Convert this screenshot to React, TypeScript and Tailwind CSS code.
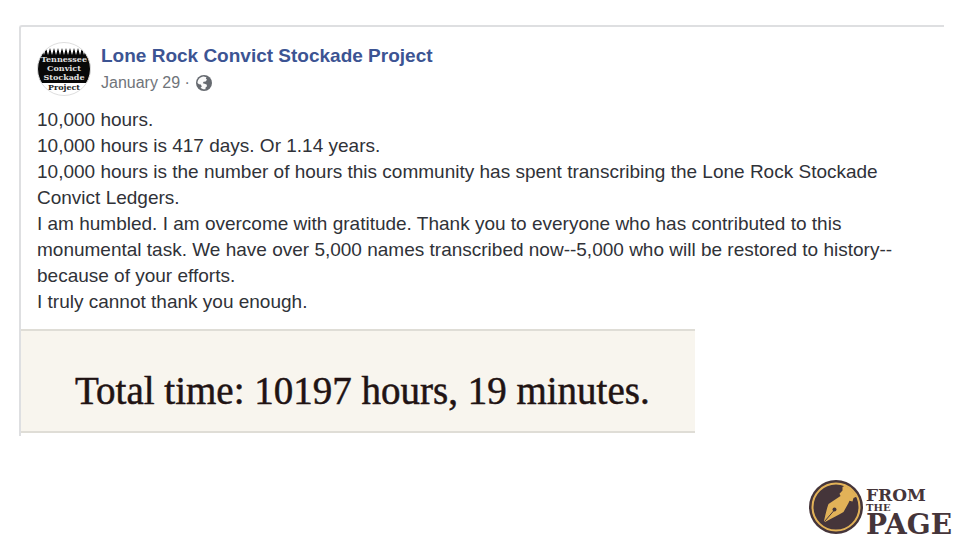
import React from "react";

function Avatar() {
  return (
    <svg className="h-[54px] w-[54px] shrink-0" viewBox="0 0 54 54" role="img" aria-label="Tennessee Convict Stockade Project">
      <defs>
        <clipPath id="avatar-clip">
          <circle cx="27" cy="27" r="26.5" />
        </clipPath>
      </defs>
      <circle cx="27" cy="27" r="26.5" fill="#fff" />
      <g clipPath="url(#avatar-clip)">
        <path
          fill="#080808"
          d="M0 41V13L3 13 5 6 7 13 9 6 11 13 13 6 15 13 17 6 19 13 21 6 23 13 25 6 27 13 29 6 31 13 33 6 35 13 37 6 39 13 41 6 43 13 45 6 47 13 49 6 51 13H54V41Z"
        />
        <g fontFamily="'DejaVu Serif', serif" fontWeight="700" fontSize="8" textAnchor="middle" fill="#e0e0e0">
          <text x="27" y="20">Tennessee</text>
          <text x="27" y="29">Convict</text>
          <text x="27" y="38">Stockade</text>
          <text x="27" y="48" fill="#222">Project</text>
        </g>
      </g>
      <circle cx="27" cy="27" r="26.500" fill="none" stroke="#dedede" />
    </svg>
  );
}

function Globe() {
  return (
    <svg className="h-4 w-4" viewBox="0 0 16 16" role="img" aria-label="Public">
      <circle cx="8" cy="8" r="8" fill="#666a70" />
      <path
        fill="#fafafa"
        d="M1.500 8C1.500 4.500 4.200 1.800 7.500 1.500L10.500 2.200 9.800 3.600 11 4.800 9.600 6.400 7.600 6.800 6.800 8.200 8.600 8.800 10.600 9.600 11 11.200 9.600 12.400 9.400 14.200C7.800 14.600 5.400 13.800 4.600 12.800L5.800 11.400 4.800 9.600 3 9.200Z"
      />
    </svg>
  );
}

function FromThePageLogo() {
  return (
    <div className="flex items-start gap-[3px] font-['DejaVu_Serif',serif] font-bold text-[#45353a]">
      <svg className="h-[54px] w-[54px]" viewBox="1 1 54 54" aria-hidden="true">
        <defs>
          <clipPath id="pen-clip">
            <circle cx="28" cy="28" r="23" />
          </clipPath>
        </defs>
        <circle cx="28" cy="28" r="27" fill="#45353a" />
        <circle cx="28" cy="28" r="23.500" fill="none" stroke="#e2b258" strokeWidth="2" />
        <g clipPath="url(#pen-clip)">
          <path
            fill="#e2b258"
            d="M16 42C17.500 36 18.500 30 20.500 25L32.500 17 31.500 14.800 34.500 11.500 34.500 8 42 4 52 16 45.500 19 44.500 22.500 41.500 21.800 40.500 24 35.500 33C30 36.500 23 39.500 17 43Z"
          />
        </g>
        <path d="M16.500 42.500 26 31.500" stroke="#45353a" strokeWidth="1" />
        <circle cx="26.500" cy="30.500" r="2" fill="#45353a" />
      </svg>
      <div className="flex flex-col pt-2">
        <span className="text-[17px] leading-[15px]">FROM</span>
        <span className="text-[10px] leading-[10px]">THE</span>
        <span className="text-[28px] leading-[23px]">PAGE</span>
      </div>
    </div>
  );
}

const paragraphs = [
  "10,000 hours.",
  "10,000 hours is 417 days. Or 1.14 years.",
  "10,000 hours is the number of hours this community has spent transcribing the Lone Rock Stockade Convict Ledgers.",
  "I am humbled. I am overcome with gratitude. Thank you to everyone who has contributed to this monumental task. We have over 5,000 names transcribed now--5,000 who will be restored to history--because of your efforts.",
  "I truly cannot thank you enough.",
];

export default function App() {
  return (
    <main className="flex min-h-screen flex-col bg-white pt-[25px] font-['Liberation_Sans',Arial,sans-serif]">
      <article className="mr-4 ml-[19px] rounded-tl-[3px] border-t-2 border-l-2 border-[#dedfe1] pb-[3px]">
        <header className="flex items-center gap-[10px] px-4 pt-[15px]">
          <Avatar />
          <div>
            <h1 className="text-[19px] leading-[27px] font-bold text-[#3c5493]">
              <a href="#project">Lone Rock Convict Stockade Project</a>
            </h1>
            <p className="flex items-center gap-[6px] text-[16px] leading-[27px] text-[#70747a]">
              <span>January 29 ·</span>
              <Globe />
            </p>
          </div>
        </header>
        <div className="mt-[11px] mr-12 ml-4 text-[19px] leading-[26px] text-[#303238]">
          {paragraphs.map((text) => (
            <p key={text}>{text}</p>
          ))}
        </div>
        <div className="mt-[14px] w-[674px] max-w-full border-y-2 border-[#dfddd6] bg-[#f8f5ee] px-[54px] pt-10 pb-5">
          <p className="font-['Liberation_Serif','Times_New_Roman',serif] text-[39px] leading-10 whitespace-nowrap text-[#211313] [-webkit-text-stroke:0.500px_#211313]">
            Total time: 10197 hours, 19 minutes.
          </p>
        </div>
      </article>
      <footer className="mt-auto flex justify-end pr-2 pb-1">
        <FromThePageLogo />
      </footer>
    </main>
  );
}
